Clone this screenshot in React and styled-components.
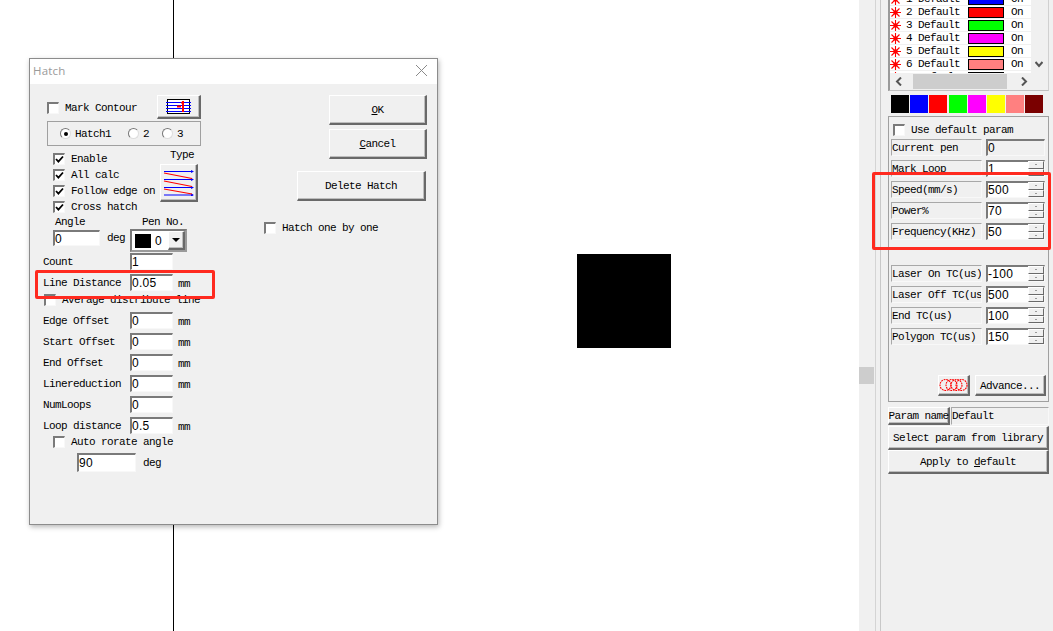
import React from "react";
import styled, { createGlobalStyle, css } from "styled-components";

const Global = createGlobalStyle`
  html, body { margin: 0; padding: 0; width: 1053px; height: 631px; overflow: hidden; background: #fff; }
  * { box-sizing: border-box; }
  #root { width: 1053px; height: 631px; }
`;

const mono = css`
  font-family: "Liberation Mono", monospace;
  font-size: 11px;
  letter-spacing: -0.6px;
  color: #000;
  white-space: pre;
  line-height: 12px;
`;

const raised = css`
  background: #f0f0f0;
  border-style: solid;
  border-width: 1px 2px 2px 1px;
  border-color: #fff #696969 #696969 #fff;
  box-shadow: inset -1px -1px 0 #bdbdbd;
`;

const sunken = css`
  border-style: solid;
  border-width: 2px 1px 1px 2px;
  border-color: #7a7a7a #f8f8f8 #f8f8f8 #7a7a7a;
`;

const Page = styled.div`
  position: relative;
  display: flex;
  width: 1053px;
  height: 631px;
  overflow: hidden;
  background: #fff;
`;

const Canvas = styled.div`
  position: relative;
  flex: 0 0 859px;
  height: 631px;
`;

const AxisLine = styled.div`
  position: absolute;
  left: 173px;
  top: 0;
  width: 1px;
  height: 631px;
  background: #000;
`;

const Shape = styled.div`
  position: absolute;
  left: 577px;
  top: 254px;
  width: 94px;
  height: 94px;
  background: #000;
`;

const Dialog = styled.div`
  position: absolute;
  left: 29px;
  top: 58px;
  width: 409px;
  height: 467px;
  display: flex;
  flex-direction: column;
  background: #f0f0f0;
  border: 1px solid #8c8c8c;
  box-shadow: 1px 2px 5px rgba(0, 0, 0, 0.28);
`;

const TitleBar = styled.div`
  flex: 0 0 25px;
  display: flex;
  align-items: center;
  justify-content: space-between;
  padding: 0 10px 2px 3px;
  background: #fff;
  font-family: "Open Sans", sans-serif;
  font-size: 11.5px;
  letter-spacing: 0.2px;
  color: #9a9a9a;
`;

const DialogBody = styled.div`
  flex: 1;
  display: flex;
`;

const LeftCol = styled.div`
  flex: 0 0 171px;
  display: flex;
  flex-direction: column;
  padding-top: 11px;
`;

const RightCol = styled.div`
  flex: 1;
  display: flex;
  flex-direction: column;
  align-items: flex-end;
  padding-top: 11px;
`;

const Text = styled.span`
  ${mono}
`;

const Box = styled.span`
  flex: 0 0 12px;
  width: 12px;
  height: 12px;
  display: inline-flex;
  background: #fff;
  ${sunken}
`;

const CheckRow = styled.div`
  display: flex;
  align-items: center;
  gap: 6px;
  height: ${(p) => p.$h || 16}px;
  margin-left: ${(p) => p.$ml || 0}px;
  margin-top: ${(p) => p.$mt || 0}px;
  align-self: ${(p) => p.$self || "stretch"};
`;

const Check = ({ on }) => (
  <Box>
    {on && (
      <svg width="9" height="9" viewBox="0 0 9 9">
        <path d="M1 4 L3.4 6.6 L8 1.5" fill="none" stroke="#000" strokeWidth="1.8" />
      </svg>
    )}
  </Box>
);

const TopRow = styled.div`
  display: flex;
  align-items: center;
  justify-content: space-between;
  height: 24px;
  margin-left: 17px;
`;

const BevelButton = styled.div`
  ${raised}
  ${mono}
  display: flex;
  align-items: center;
  justify-content: center;
  flex: 0 0 auto;
  width: ${(p) => p.$w}px;
  height: ${(p) => p.$h}px;
  margin-top: ${(p) => p.$mt || 0}px;
  margin-right: ${(p) => p.$mr || 0}px;
`;

const HatchGroup = styled.div`
  display: flex;
  align-items: center;
  height: 25px;
  margin: 2px 0 0 17px;
  padding-left: 12px;
  border: 1px solid #a0a0a0;
`;

const RadioItem = styled.span`
  display: inline-flex;
  align-items: center;
  gap: 4px;
  width: ${(p) => p.$w}px;
`;

const RadioDot = styled.span`
  flex: 0 0 11px;
  width: 11px;
  height: 11px;
  border-radius: 50%;
  background: #fff;
  border: 1px solid;
  border-color: #777 #ddd #ddd #777;
  display: flex;
  align-items: center;
  justify-content: center;
  &::after {
    content: "";
    display: ${(p) => (p.$on ? "block" : "none")};
    width: 4px;
    height: 4px;
    border-radius: 50%;
    background: #000;
  }
`;

const OptionBlock = styled.div`
  display: flex;
  height: 69px;
  margin: 0 3px 0 23px;
`;

const CheckList = styled.div`
  flex: 1;
  display: flex;
  flex-direction: column;
  padding-top: 5px;
`;

const TypeCol = styled.div`
  flex: 0 0 auto;
  display: flex;
  flex-direction: column;
  align-items: center;
  padding-top: 3px;
  gap: 3px;
`;

const TypeLabel = styled(Text)`
  margin-left: 6px;
`;

const AngleRow = styled.div`
  display: flex;
  height: 38px;
  margin-left: 23px;
`;

const AngleCol = styled.div`
  flex: 0 0 77px;
  display: flex;
  flex-direction: column;
`;

const AngleLabel = styled(Text)`
  margin: 1px 0 0 2px;
  height: 14px;
`;

const AngleInput = styled.div`
  display: flex;
  align-items: center;
  gap: 7px;
`;

const PenCol = styled.div`
  flex: 0 0 auto;
  display: flex;
  flex-direction: column;
  align-items: center;
`;

const PenLabel = styled(Text)`
  height: 14px;
  margin: 1px 0 -1px 9px;
`;

const Combo = styled.div`
  width: 57px;
  height: 23px;
  display: flex;
  align-items: center;
  padding-left: 3px;
  gap: 4px;
  background: #fff;
  border: 2px solid;
  border-color: #7a7a7a #9a9a9a #9a9a9a #7a7a7a;
`;

const ComboValue = styled.span`
  font-family: "Liberation Sans", sans-serif;
  font-size: 12px;
  color: #000;
`;

const PenSwatch = styled.span`
  width: 16px;
  height: 14px;
  background: #000;
`;

const ComboArrow = styled.span`
  ${raised}
  margin-left: auto;
  width: 17px;
  height: 19px;
  display: flex;
  align-items: center;
  justify-content: center;
`;

const Field = styled.div`
  ${sunken}
  font-family: "Liberation Sans", sans-serif;
  font-size: 12px;
  letter-spacing: 0.3px;
  line-height: 12px;
  color: #000;
  white-space: pre;
  background: ${(p) => (p.$flat ? "#f0f0f0" : "#fff")};
  width: ${(p) => p.$w}px;
  height: ${(p) => p.$h || 17}px;
  padding-left: 0;
  display: flex;
  align-items: center;
  flex: 0 0 auto;
`;

const FormList = styled.div`
  display: flex;
  flex-direction: column;
  gap: 4px;
  margin-left: 13px;
`;

const FormRowBox = styled.div`
  display: grid;
  grid-template-columns: 87px 43px auto;
  align-items: center;
  height: 17px;
`;

const Unit = styled(Text)`
  margin: 3px 0 0 5px;
`;

const FormRow = ({ label, value, unit = "mm" }) => (
  <FormRowBox>
    <Text>{label}</Text>
    <Field $w={43}>{value}</Field>
    {unit && <Unit>{unit}</Unit>}
  </FormRowBox>
);

const OffsetList = styled(FormList)`
  margin-top: 6px;
`;

const AutoInputRow = styled.div`
  display: flex;
  align-items: center;
  gap: 7px;
  margin: 5px 0 0 47px;
`;

const Underline = styled.span`
  text-decoration: underline;
`;

const Sidebar = styled.div`
  flex: 1;
  display: flex;
  background: #f0f0f0;
`;

const ScrollRail = styled.div`
  flex: 0 0 17px;
  display: flex;
  flex-direction: column;
  padding-top: 367px;
  border-right: 1px solid #d4d4d4;
`;

const RailThumb = styled.div`
  width: 15px;
  height: 17px;
  background: #cdcdcd;
`;

const RailGap = styled.div`
  flex: 0 0 5px;
  border-right: 1px solid #c8c8c8;
`;

const SidePanel = styled.div`
  flex: 1;
  display: flex;
  flex-direction: column;
  padding-left: 7px;
  padding-right: 4px;
`;

const ListFrame = styled.div`
  height: 91px;
  display: flex;
  flex-direction: column;
  border-left: 2px solid #9a9a9a;
  border-right: 1px solid #d0d0d0;
  border-bottom: 1px solid #c0c0c0;
  overflow: hidden;
`;

const ListArea = styled.div`
  height: 73px;
  flex: 0 0 73px;
  display: flex;
  overflow: hidden;
`;

const ListRows = styled.div`
  flex: 0 0 141px;
  margin-top: -7px;
  display: flex;
  flex-direction: column;
  background: #fff;
`;

const ListRow = styled.div`
  flex: 0 0 13px;
  display: flex;
  align-items: center;
  border-bottom: 1px solid #f0f0f0;
`;

const StarCell = styled.span`
  flex: 0 0 16px;
  display: flex;
  align-items: center;
`;

const NumCell = styled(Text)`
  flex: 0 0 12px;
`;

const NameCell = styled(Text)`
  flex: 0 0 50px;
`;

const ColorCell = styled.span`
  flex: 0 0 36px;
  height: 11px;
  border: 1px solid #000;
  background: ${(p) => p.$c};
`;

const OnCell = styled(Text)`
  margin-left: 7px;
`;

const VScroll = styled.div`
  flex: 1;
  display: flex;
  align-items: flex-end;
  justify-content: center;
  padding: 0 1px 4px 0;
`;

const HScroll = styled.div`
  flex: 0 0 17px;
  display: flex;
  align-items: center;
  padding-left: 5px;
`;

const HThumb = styled.div`
  width: 94px;
  height: 15px;
  margin: 0 13px 0 10px;
  background: #cdcdcd;
`;

const Palette = styled.div`
  display: flex;
  gap: 1.2px;
  height: 18px;
  margin: 4px 0 0 3px;
`;

const PaletteChip = styled.span`
  flex: 0 0 18px;
  background: ${(p) => p.$c};
`;

const ParamPanel = styled.div`
  height: 286px;
  margin-top: 3px;
  padding: 6px 2px 0 2px;
  border: 1px solid #a0a0a0;
  display: flex;
  flex-direction: column;
`;

const ParamGroup = styled.div`
  display: flex;
  flex-direction: column;
  gap: 4px;
  margin-top: ${(p) => p.$mt || 0}px;
`;

const ParamRowBox = styled.div`
  display: grid;
  grid-template-columns: 91px 59px;
  column-gap: 4px;
  height: 17px;
`;

const ParamLabel = styled.div`
  ${mono}
  height: 17px;
  display: flex;
  align-items: center;
  overflow: hidden;
  border-top: 1px solid #a8a8a8;
  border-left: 1px solid #a8a8a8;
  border-bottom: 1px solid #f8f8f8;
  border-right: 1px solid #f8f8f8;
`;

const SpinBox = styled(Field)`
  position: relative;
  padding-right: 16px;
`;

const Spin = styled.span`
  position: absolute;
  right: 0;
  top: -1px;
  width: 16px;
  height: 15px;
  display: flex;
  flex-direction: column;
`;

const SpinPart = styled.span`
  flex: 1;
  background: #f0f0f0;
  border-style: solid;
  border-width: 1px;
  border-color: #fff #696969 #696969 #fff;
  display: flex;
  align-items: center;
  justify-content: center;
  &::after {
    content: "";
    width: 2px;
    height: 1px;
    background: #999;
  }
`;

const ParamRow = ({ label, value, spin = true }) => (
  <ParamRowBox>
    <ParamLabel>{label}</ParamLabel>
    {spin ? (
      <SpinBox $w={59}>
        {value}
        <Spin>
          <SpinPart />
          <SpinPart />
        </Spin>
      </SpinBox>
    ) : (
      <Field $w={59} $flat>
        {value}
      </Field>
    )}
  </ParamRowBox>
);

const AdvanceRow = styled.div`
  display: flex;
  justify-content: flex-end;
  gap: 5px;
  margin-top: 30px;
`;

const AdvanceButton = styled(BevelButton)`
  padding-top: 2px;
`;

const NameRow = styled.div`
  display: flex;
  height: 18px;
  margin-top: 5px;
  gap: 1px;
`;

const NameField = styled(Field)`
  ${mono}
  flex: 1;
  background: #f0f0f0;
  border-width: 1px;
  border-color: #a8a8a8 #f8f8f8 #f8f8f8 #a8a8a8;
`;

const WideButton = styled(BevelButton)`
  width: 161px;
`;

const RedBox = styled.div`
  position: absolute;
  left: ${(p) => p.$x}px;
  top: ${(p) => p.$y}px;
  width: ${(p) => p.$w}px;
  height: ${(p) => p.$h}px;
  border: 3px solid #ff2a1f;
  border-radius: 2px;
  pointer-events: none;
`;

const Star = () => (
  <svg width="13" height="11" viewBox="0 0 13 11" style={{ marginLeft: -1 }}>
    <path d="M6.5 0 V11 M1 5.5 H12 M2.5 1.5 L10.5 9.5 M10.5 1.5 L2.5 9.5" stroke="#f00" strokeWidth="1.1" fill="none" />
    <circle cx="6.5" cy="5.5" r="2.2" fill="#f00" />
  </svg>
);

const ContourIcon = () => (
  <svg width="25" height="15" viewBox="0 0 25 15">
    <rect x="1.5" y="0.5" width="22" height="14" fill="#fff" stroke="#000" />
    <path d="M0 3.5 H25 M0 6.5 H25 M0 9.5 H25 M0 12.5 H25" stroke="#00f" />
    <path d="M11 7.5 H15 M17 2 V13 M17 3 L15.5 4.5" stroke="#f00" strokeWidth="2" fill="none" />
  </svg>
);

const TypeIcon = () => (
  <svg width="32" height="26" viewBox="0 0 32 26">
    <path d="M1 1.5 H30 M1 9.5 H30 M1 17.5 H30 M1 25 H30" stroke="#00f" strokeWidth="1" />
    <path d="M31 1.5 l-3 -1.5 v3 z M31 9.5 l-3 -1.5 v3 z M31 17.5 l-3 -1.5 v3 z M31 25 l-3 -1.5 v3 z" fill="#00f" />
    <path d="M1 3 L29 8.5 M1 11 L29 16.5 M1 19 L29 24" stroke="#f00" strokeWidth="1.2" />
  </svg>
);

const CircleIcon = () => (
  <svg width="29" height="14" viewBox="0 0 29 14">
    <g fill="none" stroke="#f00" strokeWidth="1.1" strokeDasharray="1.8 0.8">
      <circle cx="6.5" cy="7" r="5.5" />
      <circle cx="12.5" cy="7" r="5.5" />
      <circle cx="17.5" cy="7" r="5.5" />
      <circle cx="22.5" cy="7" r="5.5" />
    </g>
  </svg>
);

const Chevron = ({ d }) => (
  <svg width="8" height="9" viewBox="0 0 8 9">
    <path d={d} fill="none" stroke="#555" strokeWidth="2" />
  </svg>
);

const pens = [
  ["1", "#0000ff"],
  ["2", "#ff0000"],
  ["3", "#00ff00"],
  ["4", "#ff00ff"],
  ["5", "#ffff00"],
  ["6", "#ff8080"],
  ["7", "#000000"],
];

const chips = ["#000000", "#0000ff", "#ff0000", "#00ff00", "#ff00ff", "#ffff00", "#ff8080", "#7a0000"];

export default function App() {
  return (
    <Page>
      <Global />
      <Canvas>
        <AxisLine />
        <Shape />
        <Dialog>
          <TitleBar>
            <span>Hatch</span>
            <svg width="11" height="11" viewBox="0 0 11 11">
              <path d="M0 0 L11 11 M11 0 L0 11" stroke="#8a8a8a" strokeWidth="1" />
            </svg>
          </TitleBar>
          <DialogBody>
            <LeftCol>
              <TopRow>
                <CheckRow $mt={2} $self="center">
                  <Check />
                  <Text>Mark Contour</Text>
                </CheckRow>
                <BevelButton $w={44} $h={24}>
                  <ContourIcon />
                </BevelButton>
              </TopRow>
              <HatchGroup>
                <RadioItem $w={68}>
                  <RadioDot $on />
                  <Text>Hatch1</Text>
                </RadioItem>
                <RadioItem $w={34}>
                  <RadioDot />
                  <Text>2</Text>
                </RadioItem>
                <RadioItem $w={20}>
                  <RadioDot />
                  <Text>3</Text>
                </RadioItem>
              </HatchGroup>
              <OptionBlock>
                <CheckList>
                  <CheckRow $h={16}><Check on /><Text>Enable</Text></CheckRow>
                  <CheckRow $h={17}><Check on /><Text>All calc</Text></CheckRow>
                  <CheckRow $h={16}><Check on /><Text>Follow edge on</Text></CheckRow>
                  <CheckRow $h={16}><Check on /><Text>Cross hatch</Text></CheckRow>
                </CheckList>
                <TypeCol>
                  <TypeLabel>Type</TypeLabel>
                  <BevelButton $w={38} $h={38}>
                    <TypeIcon />
                  </BevelButton>
                </TypeCol>
              </OptionBlock>
              <AngleRow>
                <AngleCol>
                  <AngleLabel>Angle</AngleLabel>
                  <AngleInput>
                    <Field $w={47} $h={16}>0</Field>
                    <Text>deg</Text>
                  </AngleInput>
                </AngleCol>
                <PenCol>
                  <PenLabel>Pen No.</PenLabel>
                  <Combo>
                    <PenSwatch />
                    <ComboValue>0</ComboValue>
                    <ComboArrow>
                      <svg width="8" height="4" viewBox="0 0 8 4">
                        <path d="M0 0 H8 L4 4 Z" fill="#000" />
                      </svg>
                    </ComboArrow>
                  </Combo>
                </PenCol>
              </AngleRow>
              <FormList>
                <FormRow label="Count" value="1" unit="" />
                <FormRow label="Line Distance" value="0.05" />
              </FormList>
              <CheckRow $h={12} $ml={14} $mt={3}>
                <Check />
                <Text>Average distribute line</Text>
              </CheckRow>
              <OffsetList>
                <FormRow label="Edge Offset" value="0" />
                <FormRow label="Start Offset" value="0" />
                <FormRow label="End Offset" value="0" />
                <FormRow label="Linereduction" value="0" />
                <FormRow label="NumLoops" value="0" unit="" />
                <FormRow label="Loop distance" value="0.5" />
              </OffsetList>
              <CheckRow $h={12} $ml={23} $mt={2}>
                <Check />
                <Text>Auto rorate angle</Text>
              </CheckRow>
              <AutoInputRow>
                <Field $w={59} $h={19}>90</Field>
                <Text>deg</Text>
              </AutoInputRow>
            </LeftCol>
            <RightCol>
              <BevelButton $w={98} $h={30} $mr={10}>
                <span><Underline>O</Underline>K</span>
              </BevelButton>
              <BevelButton $w={98} $h={30} $mt={4} $mr={10}>
                <span><Underline>C</Underline>ancel</span>
              </BevelButton>
              <BevelButton $w={129} $h={30} $mt={12} $mr={11}>
                Delete Hatch
              </BevelButton>
              <CheckRow $h={12} $mt={21} $ml={63} $self="flex-start">
                <Check />
                <Text>Hatch one by one</Text>
              </CheckRow>
            </RightCol>
          </DialogBody>
        </Dialog>
      </Canvas>
      <Sidebar>
        <ScrollRail>
          <RailThumb />
        </ScrollRail>
        <RailGap />
        <SidePanel>
          <ListFrame>
            <ListArea>
              <ListRows>
                {pens.map(([n, c]) => (
                  <ListRow key={n}>
                    <StarCell><Star /></StarCell>
                    <NumCell>{n}</NumCell>
                    <NameCell>Default</NameCell>
                    <ColorCell $c={c} />
                    <OnCell>On</OnCell>
                  </ListRow>
                ))}
              </ListRows>
              <VScroll>
                <Chevron d="M0.5 2 L4 6 L7.5 2" />
              </VScroll>
            </ListArea>
            <HScroll>
              <Chevron d="M6 0.5 L2 4.5 L6 8.5" />
              <HThumb />
              <Chevron d="M2 0.5 L6 4.5 L2 8.5" />
            </HScroll>
          </ListFrame>
          <Palette>
            {chips.map((c) => (
              <PaletteChip key={c} $c={c} />
            ))}
          </Palette>
          <ParamPanel>
            <CheckRow $h={13} $ml={2}>
              <Check />
              <Text>Use default param</Text>
            </CheckRow>
            <ParamGroup $mt={3}>
              <ParamRow label="Current pen" value="0" spin={false} />
              <ParamRow label="Mark Loop" value="1" />
              <ParamRow label="Speed(mm/s)" value="500" />
              <ParamRow label="Power%" value="70" />
              <ParamRow label="Frequency(KHz)" value="50" />
            </ParamGroup>
            <ParamGroup $mt={25}>
              <ParamRow label="Laser On TC(us)" value="-100" />
              <ParamRow label="Laser Off TC(us" value="500" />
              <ParamRow label="End TC(us)" value="100" />
              <ParamRow label="Polygon TC(us)" value="150" />
            </ParamGroup>
            <AdvanceRow>
              <BevelButton $w={32} $h={21}>
                <CircleIcon />
              </BevelButton>
              <AdvanceButton $w={71} $h={21}>
                Advance...
              </AdvanceButton>
            </AdvanceRow>
          </ParamPanel>
          <NameRow>
            <BevelButton $w={62} $h={18}>Param name</BevelButton>
            <NameField $w={98} $h={18}>Default</NameField>
          </NameRow>
          <WideButton $h={24} $mt={1}>Select param from library</WideButton>
          <WideButton $h={24}>
            <span>Apply to <Underline>d</Underline>efault</span>
          </WideButton>
        </SidePanel>
      </Sidebar>
      <RedBox $x={35} $y={270} $w={180} $h={29} />
      <RedBox $x={872} $y={172} $w={179} $h={78} />
    </Page>
  );
}
